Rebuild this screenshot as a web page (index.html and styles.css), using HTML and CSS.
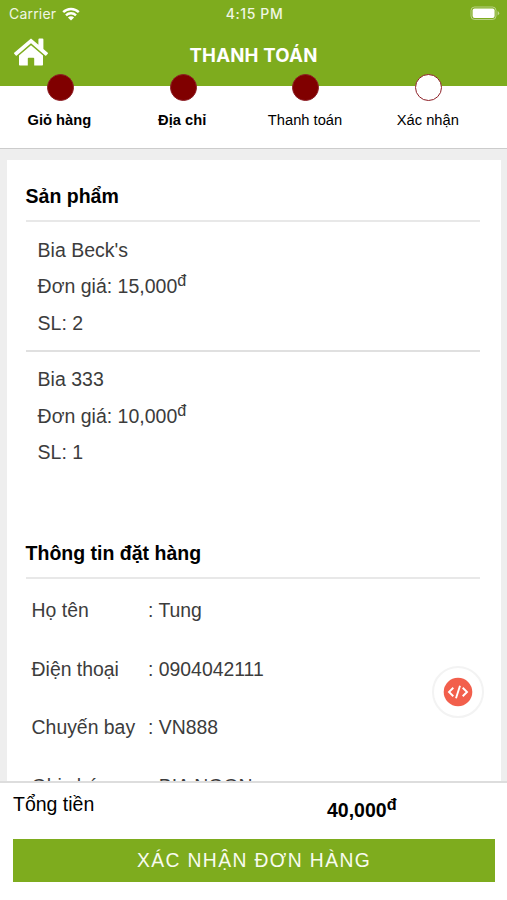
FILE: index.html
```
<!DOCTYPE html>
<html lang="vi">
<head>
    <meta charset="UTF-8">
    <meta name="viewport" content="width=device-width, initial-scale=1.0">
    <title>Thanh toán</title>
    <link rel="stylesheet" href="styles.css">
</head>
<body>

    <div class="app">
        <header class="header">
            <div class="status-bar">
                <div class="carrier">
                    <span>Carrier</span>
                    <svg class="wifi" viewBox="0 0 18 14">
                        <path d="M1.2 5.2a11 11 0 0 1 15.6 0M4 8.3a7.1 7.1 0 0 1 10 0" fill="none" stroke="#fff" stroke-width="2.4"/>
                        <path d="M9 13.6 5.9 10.5a4.4 4.4 0 0 1 6.2 0z" fill="#fff"/>
                    </svg>
                </div>
                <span class="time">4:15 PM</span>
                <svg class="battery" viewBox="0 0 30 15">
                    <rect x="1" y="1" width="25" height="12.5" rx="3.5" fill="none" stroke="#fff" stroke-opacity=".45"/>
                    <rect x="2.6" y="2.6" width="22" height="9.4" rx="2" fill="#fff"/>
                    <path d="M27.6 5v4.6q1.6-.8 1.6-2.3T27.6 5" fill="#fff" fill-opacity=".5"/>
                </svg>
            </div>
            <div class="nav">
                <svg class="home" viewBox="0 0 34 28">
                    <path d="M17 .4 24.4 6.7V1.6q0-1 1-1h3q1 0 1 1v9.3l4.4 3.8q.4.5 0 1l-1.6 1.8q-.5.5-1 0L17 5.3 2.8 17.5q-.5.5-1 0L.2 15.7q-.4-.5 0-1z" fill="#fff"/>
                    <path d="M17 7.3 29 17.6v9.1q0 .8-.8.8h-8v-7q0-.8-.8-.8h-4.8q-.8 0-.8.8v7h-8q-.8 0-.8-.8v-9.1z" fill="#fff"/>
                </svg>
                <h1>THANH TOÁN</h1>
            </div>
        </header>

        <ul class="steps">
            <li class="step done"><span class="dot"></span>Giỏ hàng</li>
            <li class="step done"><span class="dot"></span>Địa chỉ</li>
            <li class="step current"><span class="dot"></span>Thanh toán</li>
            <li class="step"><span class="dot"></span>Xác nhận</li>
        </ul>

        <main class="content">
            <div class="card">
                <h2>Sản phẩm</h2>
                <div class="product">
                    <p>Bia Beck's</p>
                    <p>Đơn giá: 15,000<sup>đ</sup></p>
                    <p>SL: 2</p>
                </div>
                <div class="product">
                    <p>Bia 333</p>
                    <p>Đơn giá: 10,000<sup>đ</sup></p>
                    <p>SL: 1</p>
                </div>

                <h2 class="order-title">Thông tin đặt hàng</h2>
                <dl class="order-info">
                    <dt>Họ tên</dt><dd>: Tung</dd>
                    <dt>Điện thoại</dt><dd>: 0904042111</dd>
                    <dt>Chuyến bay</dt><dd>: VN888</dd>
                    <dt>Ghi chú</dt><dd>: BIA NGON</dd>
                </dl>
            </div>
        </main>

        <footer class="footer">
            <div class="total">
                <span>Tổng tiền</span>
                <strong>40,000<sup>đ</sup></strong>
            </div>
            <button class="confirm">XÁC NHẬN ĐƠN HÀNG</button>
        </footer>

        <!-- Nút nổi -->
        <div class="dev-button">
            <svg viewBox="0 0 30 30">
                <circle cx="15" cy="15" r="14.3" fill="#f25f4c"/>
                <path d="M10.3 10.8 6 15l4.3 4.2M19.7 10.8 24 15l-4.3 4.2M17 8.8l-4 12.4" fill="none" stroke="#fff" stroke-width="1.9"/>
            </svg>
        </div>
    </div>

</body>
</html>
```
FILE: styles.css
```
* {
    box-sizing: border-box;
    margin: 0;
    padding: 0;
}

body {
    font-family: "Liberation Sans", Arial, sans-serif;
    background-color: #fff;
    color: #000;
}

.app {
    position: relative;
    display: flex;
    flex-direction: column;
    height: 900px;
    overflow: hidden;
}

.header {
    flex: none;
    height: 86px;
    background-color: #7eac1e;
    color: #fff;
}

.status-bar {
    display: grid;
    grid-template-columns: 1fr auto 1fr;
    align-items: center;
    height: 27px;
    padding: 0 7px 0 9px;
    font-family: Inter, sans-serif;
    font-size: 14px;
}

.carrier {
    display: flex;
    align-items: center;
    gap: 6px;
    color: #f0f6e4;
    letter-spacing: 0.2px;
}

.wifi {
    width: 18px;
    height: 14px;
}

.time {
    font-weight: 500;
    color: #f0f6e4;
    letter-spacing: 0.6px;
}

.battery {
    justify-self: end;
    width: 30px;
    height: 15px;
}

.nav {
    display: grid;
    grid-template-columns: 1fr auto 1fr;
    align-items: center;
    height: 56px;
    padding: 0 14px;
}

.home {
    width: 34px;
    height: 28px;
    margin-bottom: 7px;
}

.nav h1 {
    font-family: Inter, sans-serif;
    font-size: 18.6px;
    font-weight: 700;
    letter-spacing: 0.2px;
}

/* Các bước đặt hàng */
.steps {
    display: grid;
    grid-template-columns: repeat(4, 122.8px);
    flex: none;
    height: 63px;
    margin-left: -2px;
    list-style: none;
    border-bottom: 1px solid #ccc;
}

.step {
    display: flex;
    flex-direction: column;
    align-items: center;
    margin-top: -12px;
    font-size: 14.7px;
    line-height: 18px;
}

.done {
    font-weight: bold;
}

.dot {
    width: 27px;
    height: 27px;
    margin: 0 0 10px 2px;
    border: 1px solid #8d1f26;
    border-radius: 50%;
    background-color: #fff;
}

.done .dot,
.current .dot {
    background-color: #800000;
}

.content {
    flex: 1;
    min-height: 0;
    padding: 11px 6px 0 7px;
    background-color: #eee;
    overflow: hidden;
}

.card {
    height: 700px;
    padding: 19px 21px 0 18.6px;
    background-color: #fff;
}

.card h2 {
    height: 43px;
    border-bottom: 2px solid #e8e8e8;
    font-size: 19.5px;
    line-height: 35px;
}

.product {
    height: 129.5px;
    padding: 9.5px 12px 0;
    border-bottom: 2px solid #e0e0e0;
    color: #3c3c3c;
    font-size: 19.5px;
    line-height: 36.6px;
}

.product + .product {
    border-bottom: none;
}

sup {
    font-size: 0.83em;
    line-height: 0;
}

.card .order-title {
    margin-top: 55px;
}

.order-info {
    display: grid;
    grid-template-columns: 116.4px 1fr;
    padding: 2px 6px;
    color: #3c3c3c;
    font-size: 19.4px;
    line-height: 58.6px;
}

.footer {
    flex: none;
    height: 119px;
    padding: 4px 12px 0 13px;
    border-top: 2px solid #ddd;
    background-color: #fff;
}

.total {
    display: grid;
    grid-template-columns: 314px 1fr;
    height: 52px;
    font-size: 19.5px;
    line-height: 35px;
}

.total strong {
    padding-top: 6px;
}

.confirm {
    display: block;
    width: 100%;
    height: 43px;
    border: none;
    background-color: #7eac1e;
    color: #f8fbef;
    font-family: inherit;
    font-size: 19.3px;
    letter-spacing: 1.4px;
}

.dev-button {
    position: absolute;
    top: 666px;
    left: 432px;
    display: flex;
    align-items: center;
    justify-content: center;
    width: 52px;
    height: 52px;
    border: 2px solid #f3f3f3;
    border-radius: 50%;
    background-color: #fff;
}

.dev-button svg {
    width: 30px;
    height: 30px;
}
```
